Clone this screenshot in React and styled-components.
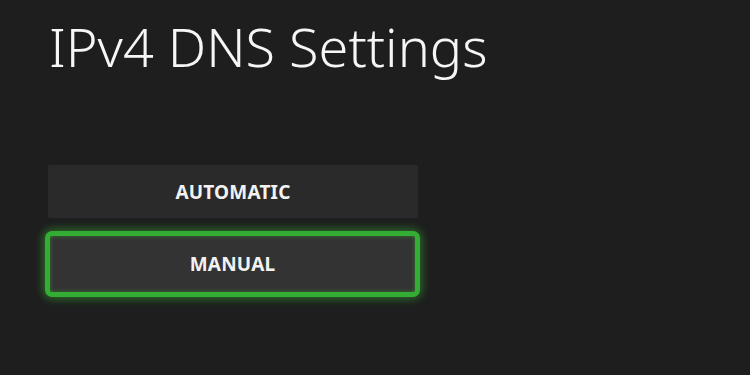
import React from 'react';
import styled, { createGlobalStyle } from 'styled-components';

const Global = createGlobalStyle`
  html, body {
    margin: 0;
    padding: 0;
    background: #1e1e1e;
  }
  body {
    font-family: "Noto Sans", "DejaVu Sans", sans-serif;
    color: #f4f4f4;
  }
`;

const Page = styled.div`
  width: 750px;
  height: 375px;
  overflow: hidden;
  background: #1e1e1e;
  padding: 10px 0 0 48px;
  box-sizing: border-box;
`;

const Title = styled.h1`
  margin: 0 0 0 1px;
  font-size: 54px;
  font-weight: 300;
  line-height: 72px;
  letter-spacing: 0;
  color: #f6f6f6;
`;

const Options = styled.div`
  margin-top: 83px;
  width: 370px;
  display: flex;
  flex-direction: column;
  gap: 13px;
`;

const Option = styled.div`
  height: ${p => (p.$focused ? '66px' : '53px')};
  display: flex;
  align-items: center;
  justify-content: center;
  box-sizing: border-box;
  background: ${p => (p.$focused ? '#333333' : '#2a2a2a')};
  border-radius: ${p => (p.$focused ? '7px' : '2px')};
  margin: ${p => (p.$focused ? '0 -2px 0 -3px' : '0')};
  border: ${p => (p.$focused ? '5px solid #34ad34' : 'none')};
  box-shadow: ${p =>
    p.$focused
      ? '0 0 8px 2px rgba(60, 200, 60, 0.45), inset 0 0 4px rgba(60, 200, 60, 0.45)'
      : 'none'};
  font-size: 19px;
  font-weight: 700;
  color: #f2f2f2;
  letter-spacing: 0.2px;
`;

export default function App() {
  return (
    <Page>
      <Global />
      <Title>IPv4 DNS Settings</Title>
      <Options>
        <Option>AUTOMATIC</Option>
        <Option $focused>MANUAL</Option>
      </Options>
    </Page>
  );
}
